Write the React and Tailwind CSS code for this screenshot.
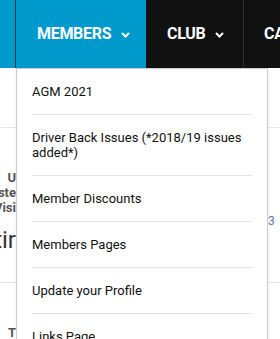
import { useState } from "react";

const menuItems = [
  "AGM 2021",
  "Driver Back Issues (*2018/19 issues added*)",
  "Member Discounts",
  "Members Pages",
  "Update your Profile",
  "Links Page",
];

const Chevron = () => (
  <svg width="9" height="6" viewBox="0 0 9 6" className="ml-[10px] mt-[1px] shrink-0">
    <polyline points="1,1 4.5,4.5 8,1" fill="none" stroke="white" strokeWidth="2" />
  </svg>
);

const App = () => {
  const [open] = useState(true);

  return (
    <div className="relative w-[280px] h-[339px] overflow-hidden bg-white font-['Roboto',sans-serif]">
      {/* nav bar */}
      <nav className="flex h-[68px] bg-[#111111] text-white">
        <div className="shrink-0 w-[16px] bg-[#0099cc] border-r border-[#0b3a4d]"></div>
        <div className="shrink-0 flex items-center bg-[#0099cc] pl-[21px] w-[130px]">
          <span className="text-[16px] font-bold tracking-[-0.3px]">MEMBERS</span>
          <Chevron />
        </div>
        <div className="shrink-0 flex items-center pl-[21px] w-[98px] border-r border-[#2c2c2c]">
          <span className="text-[16px] font-bold tracking-[-0.3px]">CLUB</span>
          <Chevron />
        </div>
        <div className="shrink-0 flex items-center pl-[20px] whitespace-nowrap">
          <span className="text-[16px] font-bold tracking-[-0.3px]">CAR</span>
        </div>
      </nav>

      {/* page behind the menu */}
      <div className="h-[60px] border-b border-[#e6e6e6]"></div>
      <div className="flex justify-between pt-[42px] h-[155px] border-b border-[#e6e6e6]">
        <div className="w-[16px] flex flex-col items-end">
          <div className="text-[13px] leading-[15px] font-bold text-[#555] whitespace-nowrap">U</div>
          <div className="text-[13px] leading-[15px] font-bold text-[#555] whitespace-nowrap">ste</div>
          <div className="text-[13px] leading-[15px] font-bold text-[#555] whitespace-nowrap">Visi</div>
          <div className="text-[24px] leading-[30px] mt-[10px] text-[#333] whitespace-nowrap">tir</div>
        </div>
        <div className="w-[12px] pt-[44px] text-[12px] leading-[15px] text-[#5577aa]">3</div>
      </div>
      <div className="w-[16px] flex justify-end pt-[42px]">
        <span className="text-[13px] leading-[15px] font-bold text-[#555]">T</span>
      </div>

      {/* dropdown */}
      {open && (
        <ul className="absolute left-[16px] top-[68px] w-[252px] bg-white border border-[#cccccc] shadow-[0_2px_4px_rgba(0,0,0,0.08)] px-[15px]">
          {menuItems.map((item) => (
            <li
              key={item}
              className="py-[15px] border-b border-[#e3e3e3] text-[13px] leading-[15px] text-[#111]"
            >
              {item}
            </li>
          ))}
        </ul>
      )}
    </div>
  );
};

export default App;
